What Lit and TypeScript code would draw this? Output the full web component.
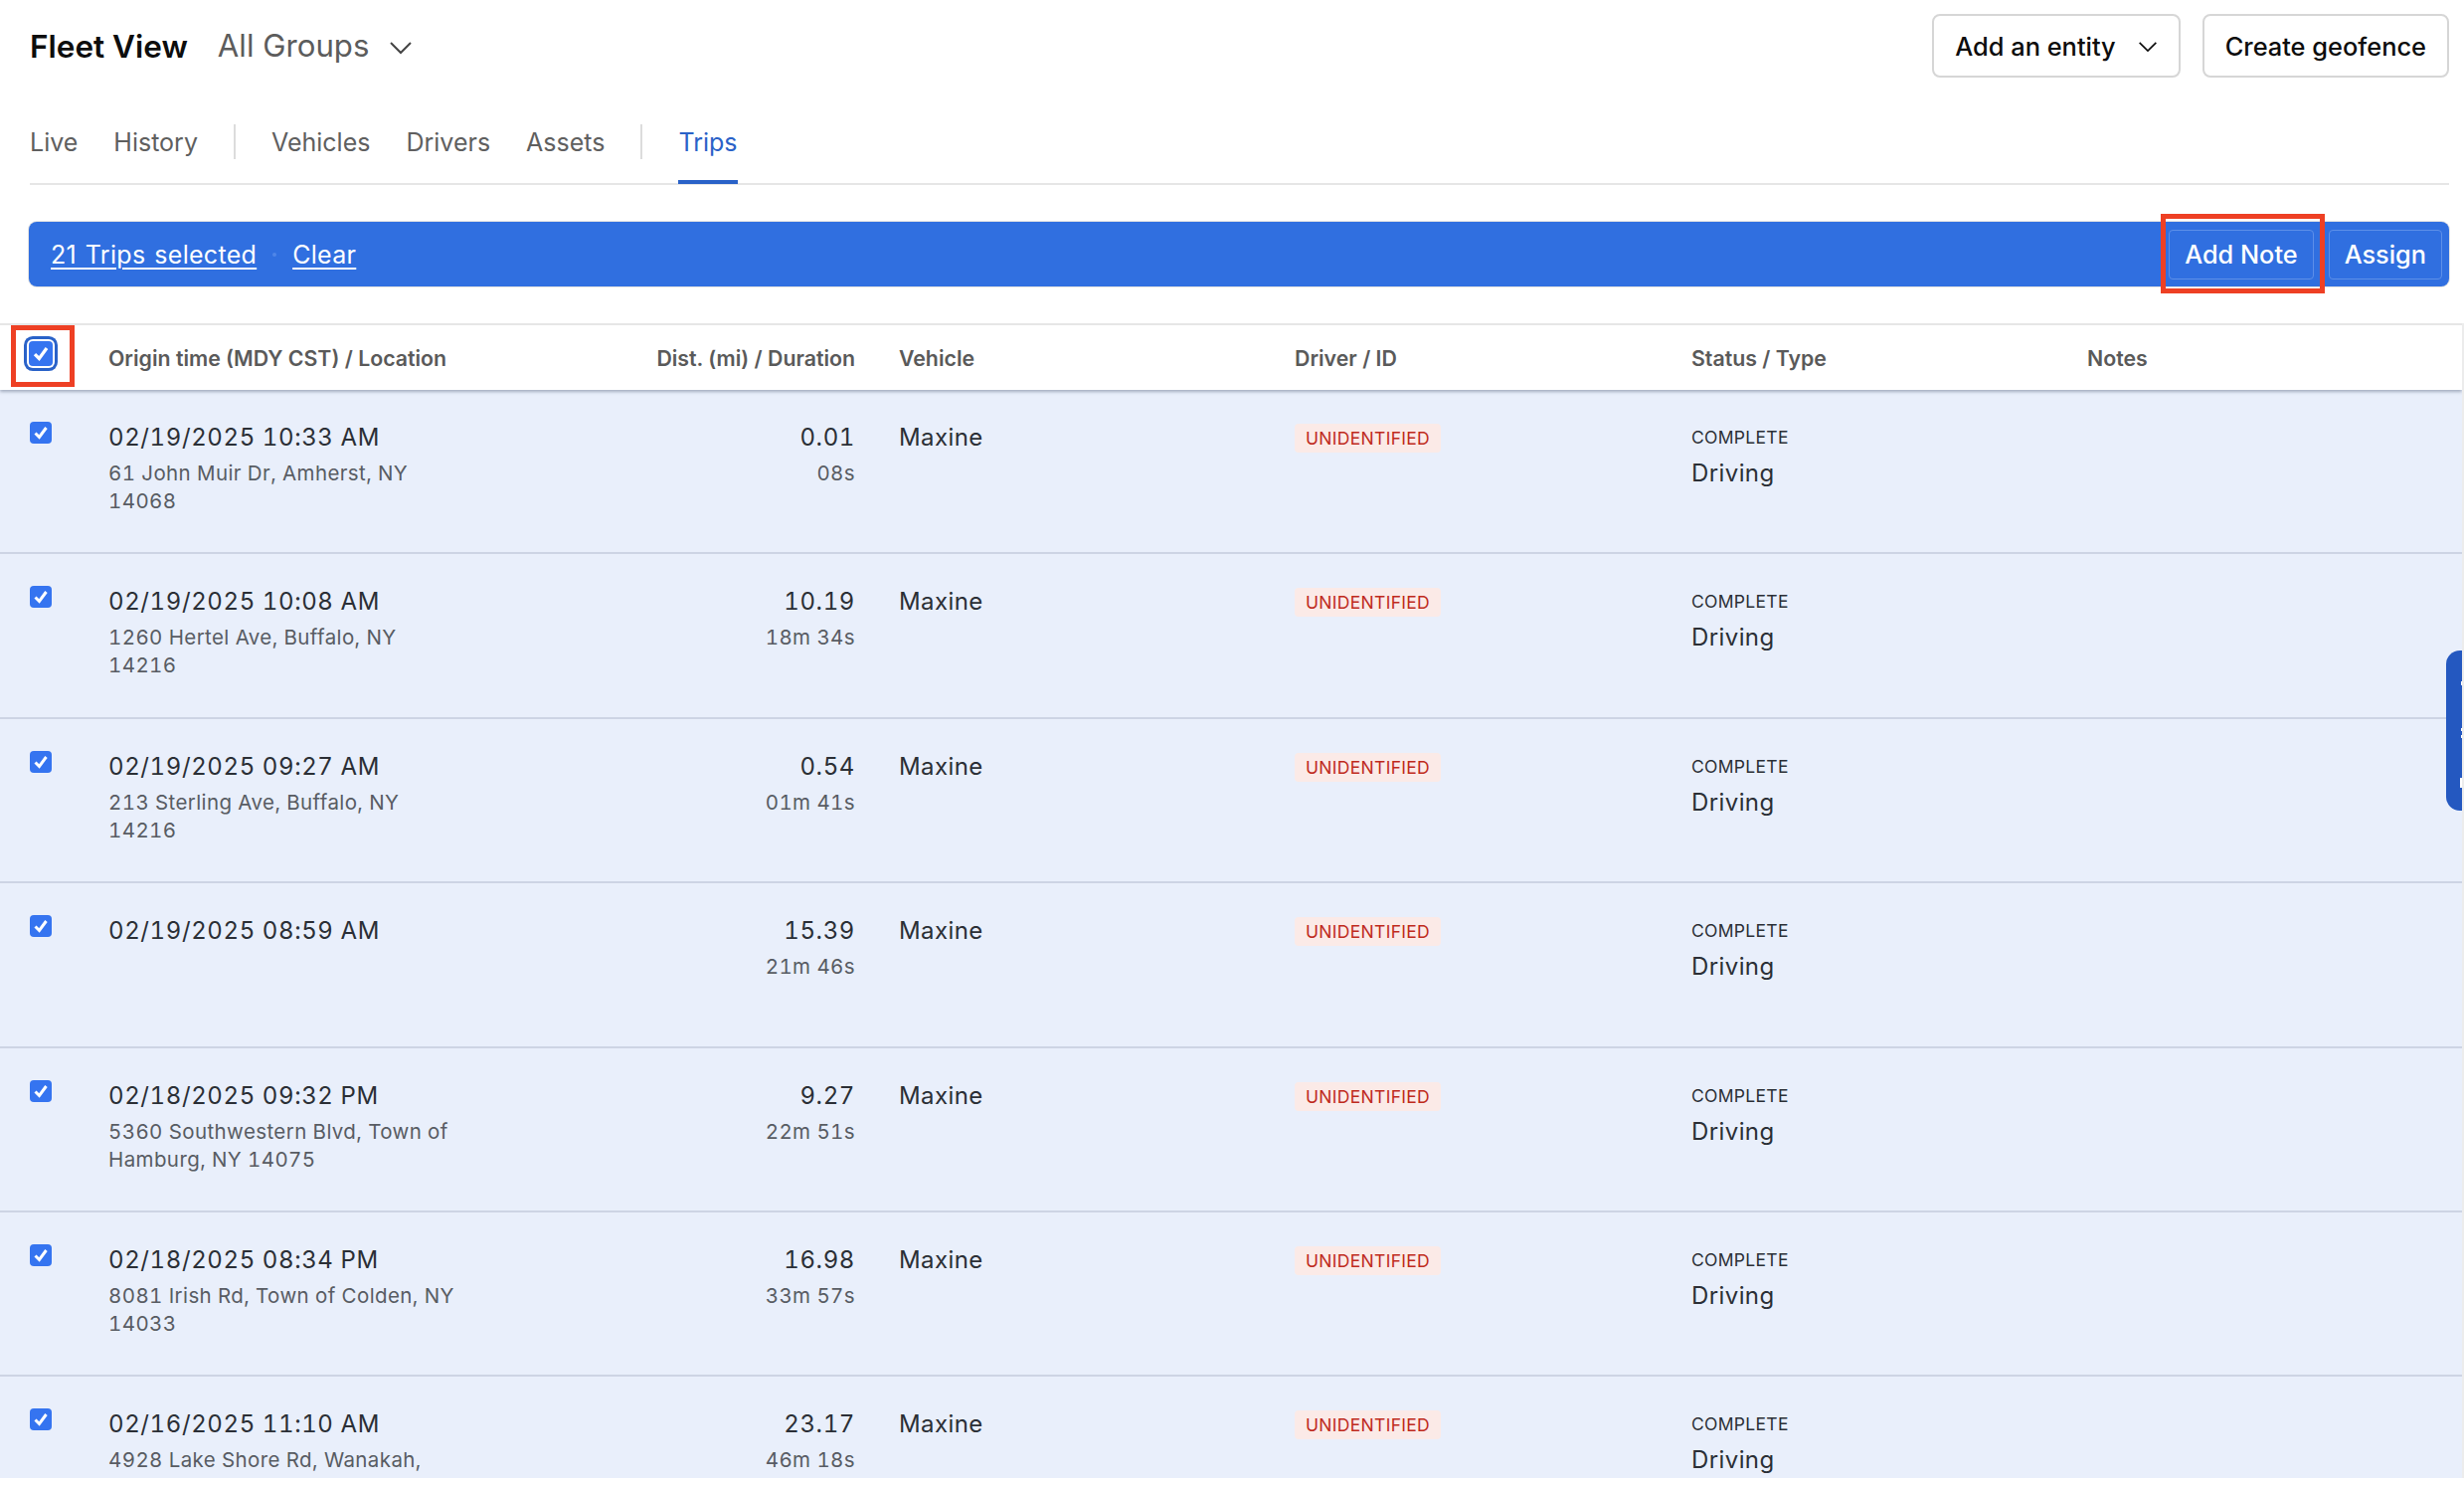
import { LitElement, html, css } from 'lit';
import { customElement } from 'lit/decorators.js';

interface Trip {
    time: string;
    address: string[];
    dist: string;
    duration: string;
}

const TRIPS: Trip[] = [
    { time: '02/19/2025 10:33 AM', address: ['61 John Muir Dr, Amherst, NY', '14068'], dist: '0.01', duration: '08s' },
    { time: '02/19/2025 10:08 AM', address: ['1260 Hertel Ave, Buffalo, NY', '14216'], dist: '10.19', duration: '18m 34s' },
    { time: '02/19/2025 09:27 AM', address: ['213 Sterling Ave, Buffalo, NY', '14216'], dist: '0.54', duration: '01m 41s' },
    { time: '02/19/2025 08:59 AM', address: [], dist: '15.39', duration: '21m 46s' },
    { time: '02/18/2025 09:32 PM', address: ['5360 Southwestern Blvd, Town of', 'Hamburg, NY 14075'], dist: '9.27', duration: '22m 51s' },
    { time: '02/18/2025 08:34 PM', address: ['8081 Irish Rd, Town of Colden, NY', '14033'], dist: '16.98', duration: '33m 57s' },
    { time: '02/16/2025 11:10 AM', address: ['4928 Lake Shore Rd, Wanakah,'], dist: '23.17', duration: '46m 18s' },
];

const chevron = html`<svg class="chevron" viewBox="0 0 24 14" fill="none" stroke="currentColor" stroke-width="2">
    <path d="M2 2l10 10L22 2" />
</svg>`;

const check = html`<span class="check">
    <svg viewBox="0 0 22 22" fill="none" stroke="#fff" stroke-width="3"><path d="M5.5 11.5l4 4 7-9.5" /></svg>
</span>`;

@customElement('app-root')
export class AppRoot extends LitElement {
    public static override styles = css`
        :host {
            display: block;
            position: relative;
            height: 1494px;
            overflow: hidden;
            background: #fff;
            font-family: Inter, "Liberation Sans", sans-serif;
            color: #2b2f36;
        }

        .top {
            display: flex;
            align-items: center;
            justify-content: space-between;
            padding: 14px 15px 0 30px;
        }

        .title {
            display: flex;
            align-items: center;
            font-size: 31.2px;
            color: #5c5c5c;
        }

        .title b {
            font-size: 31.5px;
            font-weight: 600;
            color: #0d0d0d;
            margin-right: 30px;
        }

        .title .chevron {
            width: 24px;
            height: 14px;
            margin: 4px 0 0 20px;
            color: #444;
        }

        .actions {
            display: flex;
            gap: 22px;
        }

        .btn {
            display: flex;
            align-items: center;
            height: 64px;
            box-sizing: border-box;
            padding: 0 21px;
            border: 2px solid #d6d6d6;
            border-radius: 8px;
            font-size: 25.4px;
            font-weight: 500;
            color: #0d0d0d;
        }

        .btn .chevron {
            width: 20px;
            height: 12px;
            margin: 2px 0 0 22px;
        }

        .tabs {
            display: flex;
            align-items: center;
            gap: 36px;
            height: 108px;
            box-sizing: border-box;
            margin: 0 15px 0 30px;
            border-bottom: 2px solid #e6e6e6;
            font-size: 25px;
            color: #5f5f5f;
        }

        .tab {
            display: flex;
            align-items: center;
            height: 100%;
            box-sizing: border-box;
            padding-top: 24px;
        }

        .tab.active {
            position: relative;
            color: #2a62c8;
        }

        .tab.active::after {
            content: '';
            position: absolute;
            left: 0;
            right: 0;
            bottom: -1px;
            height: 4px;
            background: #2a62c8;
        }

        .sep {
            width: 2px;
            height: 35px;
            margin-top: 22px;
            background: #dcdcdc;
        }

        .bar {
            display: flex;
            align-items: center;
            justify-content: space-between;
            height: 65px;
            margin: 37px 15px 37px 29px;
            padding: 0 7px 0 22px;
            box-sizing: border-box;
            border-radius: 8px;
            background: #306fe0;
            box-shadow: 0 0 0 1px #e4e4e4;
            font-size: 25px;
            color: #fff;
        }

        .bar a {
            text-decoration: underline;
            text-underline-offset: 4px;
            text-decoration-thickness: 2px;
        }

        .bar .links {
            display: flex;
            align-items: center;
            gap: 16px;
            letter-spacing: 0.3px;
            word-spacing: 1.5px;
        }

        .bar .dot {
            width: 4px;
            height: 4px;
            border-radius: 50%;
            background: #4f86e8;
        }

        .bar .btns {
            display: flex;
            gap: 15px;
        }

        .bar .btns span {
            display: flex;
            align-items: center;
            height: 50px;
            box-sizing: border-box;
            padding: 0 15px;
            border: 1px solid #5d8fe8;
            border-radius: 4px;
            font-size: 25.3px;
            font-weight: 500;
        }

        .table {
            height: 1161px;
            overflow: hidden;
            margin-right: 2px;
        }

        .grid {
            display: grid;
            grid-template-columns: 109px 400px 351px 442px 399px 398px 1fr;
        }

        .head {
            position: relative;
            z-index: 1;
            height: 67px;
            box-sizing: border-box;
            border-top: 2px solid #e6e6e6;
            background: #fff;
            box-shadow: 0 2px 3px rgba(80, 95, 120, 0.45);
            align-items: center;
            font-size: 21.3px;
            font-weight: 600;
            color: #5a5a5a;
        }

        .head .check-cell {
            padding: 0 0 8px 29px;
        }

        .head .check {
            width: 24px;
            height: 25px;
            box-shadow: 0 0 0 2px #fff, 0 0 0 5px #2a62c8;
        }

        .row {
            height: 165.4px;
            box-sizing: border-box;
            padding-top: 33px;
            border-bottom: 2px solid #cdd4e4;
            background: #e9effb;
            font-size: 24px;
            letter-spacing: 0.4px;
            font-variant-numeric: tabular-nums;
        }

        .check {
            display: block;
            width: 22px;
            height: 22px;
            border-radius: 4px;
            background: #3574f0;
        }

        .check svg {
            display: block;
            width: 100%;
            height: 100%;
        }

        .row .check-cell {
            margin-top: -1px;
            padding-left: 30px;
        }

        .main {
            line-height: 30px;
            letter-spacing: 0.6px;
        }

        .sub {
            margin-top: 7px;
            font-size: 20.5px;
            line-height: 28px;
            color: #585c63;
        }

        .right {
            text-align: right;
        }

        .pad {
            padding-left: 44px;
        }

        .badge {
            display: block;
            width: fit-content;
            margin-top: 1px;
            padding: 0 11px;
            height: 29px;
            line-height: 29px;
            border-radius: 4px;
            background: #fbeae7;
            color: #bf2a1d;
            font-size: 17.5px;
            letter-spacing: 0.3px;
        }

        .status {
            font-size: 17.5px;
            line-height: 30px;
            letter-spacing: 0.3px;
        }

        .type {
            margin-top: 6px;
            line-height: 30px;
        }

        .mark {
            position: absolute;
            z-index: 2;
            box-sizing: border-box;
            border: 5px solid #ee4024;
            pointer-events: none;
        }

        .mark.note {
            left: 2173px;
            top: 215px;
            width: 165px;
            height: 80px;
        }

        .mark.all {
            left: 11px;
            top: 327px;
            width: 64px;
            height: 62px;
        }

        .side-tab {
            position: absolute;
            z-index: 2;
            left: 2460px;
            top: 654px;
            width: 16px;
            height: 161px;
            border-radius: 14px 0 0 14px;
            background: #2458c0;
        }

        .side-tab svg {
            display: block;
            width: 16px;
            height: 161px;
        }

        .edge {
            position: absolute;
            top: 325px;
            right: 0;
            width: 2px;
            height: 1161px;
            background: #ececec;
        }
    `;

    private _renderRow(t: Trip) {
        return html`
            <div class="grid row">
                <div class="check-cell">${check}</div>
                <div>
                    <div class="main">${t.time}</div>
                    ${t.address.length
                        ? html`<div class="sub">${t.address.map((l) => html`${l}<br />`)}</div>`
                        : null}
                </div>
                <div class="right">
                    <div class="main">${t.dist}</div>
                    <div class="sub">${t.duration}</div>
                </div>
                <div class="pad">Maxine</div>
                <div><span class="badge">UNIDENTIFIED</span></div>
                <div>
                    <div class="status">COMPLETE</div>
                    <div class="type">Driving</div>
                </div>
                <div></div>
            </div>
        `;
    }

    override render() {
        return html`
            <div class="top">
                <div class="title"><b>Fleet View</b>All Groups ${chevron}</div>
                <div class="actions">
                    <div class="btn">Add an entity ${chevron}</div>
                    <div class="btn">Create geofence</div>
                </div>
            </div>
            <div class="tabs">
                <div class="tab">Live</div>
                <div class="tab">History</div>
                <div class="sep"></div>
                <div class="tab">Vehicles</div>
                <div class="tab">Drivers</div>
                <div class="tab">Assets</div>
                <div class="sep"></div>
                <div class="tab active">Trips</div>
            </div>
            <div class="bar">
                <div class="links"><a>21 Trips selected</a><span class="dot"></span><a>Clear</a></div>
                <div class="btns"><span>Add Note</span><span>Assign</span></div>
            </div>
            <div class="table">
                <div class="grid head">
                    <div class="check-cell">${check}</div>
                    <div>Origin time (MDY CST) / Location</div>
                    <div class="right">Dist. (mi) / Duration</div>
                    <div class="pad">Vehicle</div>
                    <div>Driver / ID</div>
                    <div>Status / Type</div>
                    <div>Notes</div>
                </div>
                ${TRIPS.map((t) => this._renderRow(t))}
            </div>
            <div class="mark note"></div>
            <div class="mark all"></div>
            <div class="side-tab">
                <svg viewBox="0 0 16 161" fill="#fff">
                    <rect x="15" y="31" width="1" height="4" />
                    <rect x="15" y="78" width="1" height="3" />
                    <rect x="15" y="85" width="1" height="3" />
                    <rect x="14" y="128" width="2" height="10" />
                </svg>
            </div>
            <div class="edge"></div>
        `;
    }
}
